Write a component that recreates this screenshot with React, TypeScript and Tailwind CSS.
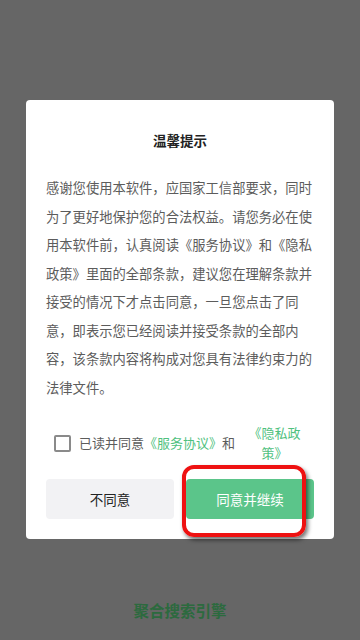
import React from "react";

export default function App() {
  const font = { fontFamily: '"Noto Sans CJK SC", "Noto Sans", sans-serif' };
  return (
    <div
      className="relative w-[360px] h-[640px] bg-[#666666] flex flex-col items-center overflow-hidden"
      style={font}
    >
      <div className="mt-[100px] w-[308px] bg-white rounded-[4px] px-5 pt-[30px] pb-5">
        <div className="text-center text-[13.5px] leading-[20px] font-bold text-[#222222]">
          温馨提示
        </div>
        <p className="mt-[24px] text-[13.3px] leading-[28.5px] text-[#5c5c5c]">
          感谢您使用本软件，应国家工信部要求，同时为了更好地保护您的合法权益。请您务必在使用本软件前，认真阅读《服务协议》和《隐私政策》里面的全部条款，建议您在理解条款并接受的情况下才点击同意，一旦您点击了同意，即表示您已经阅读并接受条款的全部内容，该条款内容将构成对您具有法律约束力的法律文件。
        </p>
        <div className="mt-[21px] h-[40px] flex items-center pl-2">
          <div className="w-[17px] h-[17px] border-2 border-[#8a8a8a] rounded-[2px] shrink-0" />
          <div className="ml-2 text-[13px] leading-[20px] text-[#5c5c5c] whitespace-nowrap">
            已读并同意<span className="text-[#4fc17e]">《服务协议》</span>和
          </div>
          <div className="ml-[13px] w-[53px] text-center text-[13px] leading-[20px] text-[#4fc17e]">
            《隐私政策》
          </div>
        </div>
        <div className="mt-4 flex gap-3">
          <button className="w-[128px] h-[40px] rounded-[4px] bg-[#f2f2f4] text-[13.5px] text-[#222222]">
            不同意
          </button>
          <button className="w-[128px] h-[40px] rounded-[4px] bg-[#5bc58a] text-[13.5px] text-white">
            同意并继续
          </button>
        </div>
      </div>
      <div className="mt-[61px] text-[15.5px] leading-[20px] font-bold text-[#2c6a3e]">
        聚合搜索引擎
      </div>
      <div className="absolute left-[182px] top-[465px] w-[124px] h-[72px] border-4 border-[#ee1111] rounded-[12px] shadow-[2px_3px_4px_rgba(0,0,0,0.55)]" />
    </div>
  );
}
